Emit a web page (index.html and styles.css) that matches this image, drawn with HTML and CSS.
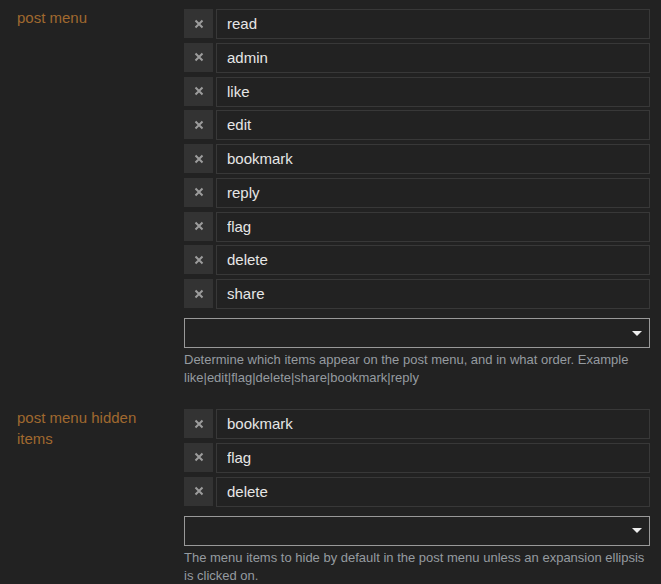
FILE: index.html
```html
<!DOCTYPE html>
<html lang="en">
<head>
  <meta charset="UTF-8">
  <meta name="viewport" content="width=device-width, initial-scale=1.0">
  <title>Site Settings</title>
  <link rel="stylesheet" href="styles.css">
</head>
<body>
  <div class="setting">
    <div class="setting-label">post menu</div>
    <div class="setting-value">
      <div class="values">
        <div class="value"><button class="remove"><svg viewBox="0 0 10 10"><path d="M1.5 1.5L8.5 8.5M8.5 1.5L1.5 8.5"/></svg></button><input type="text" value="read"></div>
        <div class="value"><button class="remove"><svg viewBox="0 0 10 10"><path d="M1.5 1.5L8.5 8.5M8.5 1.5L1.5 8.5"/></svg></button><input type="text" value="admin"></div>
        <div class="value"><button class="remove"><svg viewBox="0 0 10 10"><path d="M1.5 1.5L8.5 8.5M8.5 1.5L1.5 8.5"/></svg></button><input type="text" value="like"></div>
        <div class="value"><button class="remove"><svg viewBox="0 0 10 10"><path d="M1.5 1.5L8.5 8.5M8.5 1.5L1.5 8.5"/></svg></button><input type="text" value="edit"></div>
        <div class="value"><button class="remove"><svg viewBox="0 0 10 10"><path d="M1.5 1.5L8.5 8.5M8.5 1.5L1.5 8.5"/></svg></button><input type="text" value="bookmark"></div>
        <div class="value"><button class="remove"><svg viewBox="0 0 10 10"><path d="M1.5 1.5L8.5 8.5M8.5 1.5L1.5 8.5"/></svg></button><input type="text" value="reply"></div>
        <div class="value"><button class="remove"><svg viewBox="0 0 10 10"><path d="M1.5 1.5L8.5 8.5M8.5 1.5L1.5 8.5"/></svg></button><input type="text" value="flag"></div>
        <div class="value"><button class="remove"><svg viewBox="0 0 10 10"><path d="M1.5 1.5L8.5 8.5M8.5 1.5L1.5 8.5"/></svg></button><input type="text" value="delete"></div>
        <div class="value"><button class="remove"><svg viewBox="0 0 10 10"><path d="M1.5 1.5L8.5 8.5M8.5 1.5L1.5 8.5"/></svg></button><input type="text" value="share"></div>
      </div>
      <div class="combo"><span class="caret"></span></div>
      <div class="desc">Determine which items appear on the post menu, and in what order. Example like|edit|flag|delete|share|bookmark|reply</div>
    </div>
  </div>

  <div class="setting">
    <div class="setting-label">post menu hidden items</div>
    <div class="setting-value">
      <div class="values">
        <div class="value"><button class="remove"><svg viewBox="0 0 10 10"><path d="M1.5 1.5L8.5 8.5M8.5 1.5L1.5 8.5"/></svg></button><input type="text" value="bookmark"></div>
        <div class="value"><button class="remove"><svg viewBox="0 0 10 10"><path d="M1.5 1.5L8.5 8.5M8.5 1.5L1.5 8.5"/></svg></button><input type="text" value="flag"></div>
        <div class="value"><button class="remove"><svg viewBox="0 0 10 10"><path d="M1.5 1.5L8.5 8.5M8.5 1.5L1.5 8.5"/></svg></button><input type="text" value="delete"></div>
      </div>
      <div class="combo"><span class="caret"></span></div>
      <div class="desc">The menu items to hide by default in the post menu unless an expansion ellipsis is clicked on.</div>
    </div>
  </div>
</body>
</html>
```

FILE: styles.css
```css
body {
  margin: 0;
  padding: 9px 11px 0 17px;
  background: #222222;
  font-family: "Liberation Sans", Arial, sans-serif;
  overflow: hidden;
}

.setting {
  display: flex;
  margin-bottom: 22px;
}

.setting-label {
  width: 150px;
  flex: none;
  margin-right: 17px;
  margin-top: -2px;
  color: #a0692f;
  font-size: 15px;
  line-height: 21px;
}

.setting-value {
  flex: 1;
}

.values {
  display: flex;
  flex-direction: column;
  gap: 3.75px;
}

.value {
  display: flex;
  gap: 3px;
  height: 30px;
}

.remove {
  width: 29px;
  height: 29px;
  padding: 0;
  border: none;
  background: #333333;
  display: flex;
  align-items: center;
  justify-content: center;
}

.remove svg {
  width: 10px;
  height: 10px;
  stroke: #9c9c9c;
  stroke-width: 2;
}

.value input {
  flex: 1;
  height: 30px;
  box-sizing: border-box;
  margin: 0;
  padding: 0 10px 1px;
  border: 1px solid #383838;
  background: #222222;
  color: #e6e6e6;
  font-family: inherit;
  font-size: 15px;
}

.combo {
  margin-top: 9px;
  height: 30px;
  box-sizing: border-box;
  border: 1px solid #999999;
  display: flex;
  align-items: center;
  justify-content: flex-end;
  padding-right: 7px;
}

.caret {
  width: 0;
  height: 0;
  border-left: 5px solid transparent;
  border-right: 5px solid transparent;
  border-top: 5px solid #eeeeee;
}

.desc {
  margin-top: 3px;
  color: #959ba0;
  font-size: 13px;
  line-height: 18px;
}
```
